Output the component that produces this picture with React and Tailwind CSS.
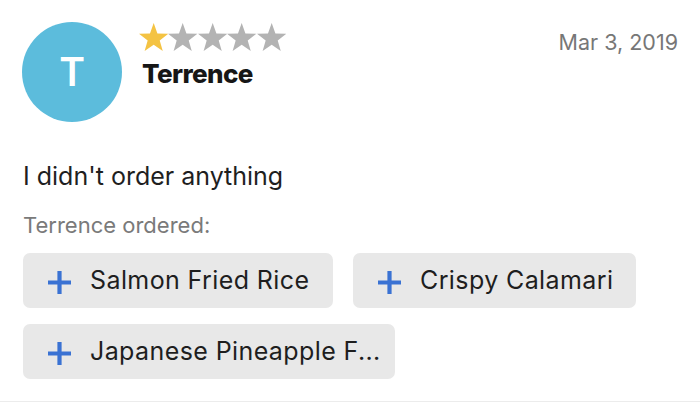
import React from "react";

const Star = ({ color }) => (
  <svg width="29.4" height="28" viewBox="-9.511 -10 19.022 18.09" className="block shrink-0">
    <path
      d="M0 -10 L2.4 -3.3 L9.511 -3.09 L3.9 1.27 L5.878 8.09 L0 4.1 L-5.878 8.09 L-3.9 1.27 L-9.511 -3.09 L-2.4 -3.3 Z"
      fill={color}
    />
  </svg>
);

const Plus = () => (
  <svg width="23" height="23" viewBox="0 0 23 23" className="block shrink-0 mt-[3px]">
    <path d="M11.5 0v23M0 11.5h23" stroke="#3a72d3" strokeWidth="4.2" />
  </svg>
);

const Chip = ({ label, w }) => (
  <div className={`flex h-[55px] items-center gap-[19px] rounded-[7px] bg-[#e8e8e8] pl-[25px] ${w}`}>
    <Plus />
    <span className="whitespace-nowrap text-[25px] leading-none tracking-[0.4px] text-[#1e1e1e]">
      {label}
    </span>
  </div>
);

export default function App() {
  return (
    <div className="h-[403px] w-[700px] overflow-hidden bg-white font-['Inter',sans-serif]">
      <div className="flex flex-col border-b border-[#ececec] pb-[22px]">
        <div className="flex items-start pl-[22px] pt-[22px] pr-[22px]">
          <div className="flex h-[100px] w-[100px] shrink-0 items-center justify-center rounded-full bg-[#5cbcdc] pb-[1px] text-[39px] font-semibold leading-none text-white">
            T
          </div>
          <div className="ml-[17px] flex flex-col pt-[1px]">
            <div className="flex">
              <Star color="#f4c343" />
              <Star color="#b3b3b3" />
              <Star color="#b3b3b3" />
              <Star color="#b3b3b3" />
              <Star color="#b3b3b3" />
            </div>
            <div className="mt-[10px] pl-[3px] text-[26px] font-extrabold leading-none tracking-[-0.6px] text-[#161616]">
              Terrence
            </div>
          </div>
          <div className="ml-auto pt-[10px] text-[21.5px] leading-none text-[#777777]">
            Mar 3, 2019
          </div>
        </div>
        <div className="mt-[42px] pl-[23px] text-[25px] leading-none text-[#1f1f1f]">
          I didn't order anything
        </div>
        <div className="mt-[25px] pl-[23px] text-[22px] leading-none text-[#7a7a7a]">
          Terrence ordered:
        </div>
        <div className="mt-[17px] flex flex-wrap gap-x-[20px] gap-y-[16px] pl-[23px]">
          <Chip label="Salmon Fried Rice" w="w-[310px]" />
          <Chip label="Crispy Calamari" w="w-[283px]" />
          <Chip label="Japanese Pineapple F..." w="w-[372px]" />
        </div>
      </div>
    </div>
  );
}
